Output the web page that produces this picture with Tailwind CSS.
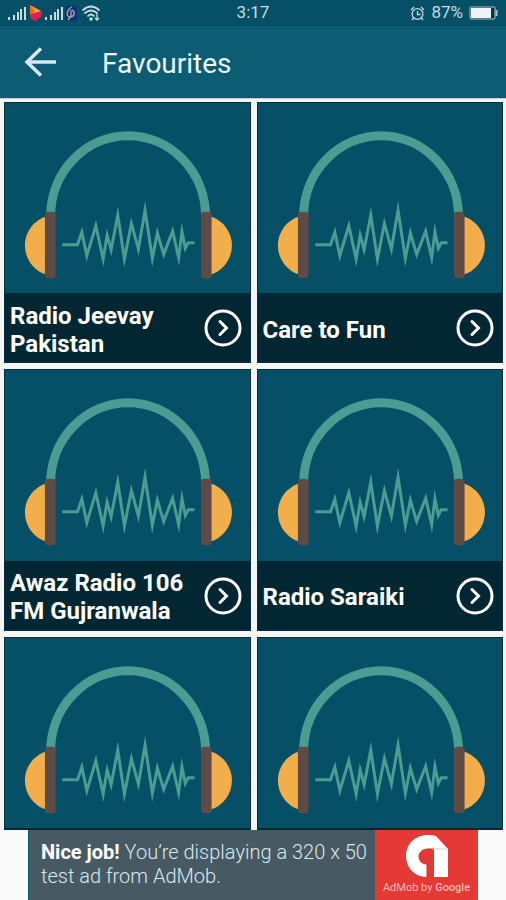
<!DOCTYPE html>
<html lang="en">
<head>
<meta charset="utf-8">
<meta name="viewport" content="width=device-width, initial-scale=1">
<title>Favourites</title>
<script src="https://cdn.jsdelivr.net/npm/@tailwindcss/browser@4"></script>
</head>
<body class="flex h-screen flex-col overflow-hidden bg-[#fafafa] font-['Roboto',sans-serif]">
<svg class="hidden" aria-hidden="true">
  <symbol id="headphones" viewBox="12 21 741 573">
    <path d="M152 364A233 243 0 0 1 618 364" fill="none" stroke="#4b9c93" stroke-width="27"/>
    <path d="M140 363A92 92 0 0 0 140 539ZM632 363A92 92 0 0 1 632 539Z" fill="#f2ae4b"/>
    <rect x="135" y="350" width="32" height="200" rx="10" fill="#5e4b45"/>
    <rect x="604" y="350" width="32" height="200" rx="10" fill="#5e4b45"/>
    <path d="M187 449H233L246 411L261 482L288 392L310 492L322 420L334 464L354 360L374 492L395 385L416 462L436 345L458 490L473 414L492 478L519 408L537 488L547 410L557 460L566 443H585" fill="none" stroke="#4b9c93" stroke-width="9" stroke-miterlimit="8"/>
  </symbol>
  <symbol id="go" viewBox="0 0 38 38">
    <circle cx="19" cy="19" r="17" fill="none" stroke="#fff" stroke-width="3"/>
    <path d="M16 12.500L22.500 19L16 25.500" fill="none" stroke="#fff" stroke-width="3" stroke-linecap="round"/>
  </symbol>
</svg>

<div class="grid h-[26px] shrink-0 grid-cols-3 items-center bg-[#055066] px-2 text-[#c9dbe1]">
  <svg class="h-5 w-24" viewBox="0 0 96 20" aria-hidden="true">
    <g fill="#c9dbe1">
      <path d="M0 14h2v3h-2zM5 12h2v5h-2zM9 9h2v8h-2zM12 6h2v11h-2zM16 4h2v13h-2zM37 14h2v3h-2zM42 12h2v5h-2zM46 9h2v8h-2zM49 6h2v11h-2zM53 4h2v13h-2z"/>
    </g>
    <path d="M22 2L33 8L32 11L24 12Z" fill="#f6a32b"/>
    <path d="M22 11L34 8L33 14L27 18L23 16Z" fill="#e0214f"/>
    <path d="M22 2L27 8L22 12Z" fill="#f0642d"/>
    <rect x="57" y="3" width="12" height="15" rx="2" fill="#12307f"/>
    <path d="M64 4C58 7 58 14 62 14S68 9 64 7M63 7v6L60 17" fill="none" stroke="#b8a99a" stroke-width="1.300"/>
    <g fill="none" stroke="#c9dbe1" stroke-width="1.700" stroke-linecap="round">
      <path d="M75 7Q83 0 91 7M77 10Q83 5 89 10M80 13Q83 10 86 13"/>
    </g>
    <circle cx="83" cy="16" r="1.800" fill="#c9dbe1"/>
    <path d="M89 11v6M87 15l2 2l2-2" fill="none" stroke="#c9dbe1" stroke-width="1.300"/>
  </svg>
  <span class="text-center text-[17px]">3:17</span>
  <div class="flex items-center justify-end gap-[6px]">
    <svg class="size-[15px]" viewBox="0 0 15 15" fill="none" stroke="#c9dbe1" stroke-width="1.300" aria-hidden="true">
      <circle cx="7.500" cy="8" r="5.400"/><path d="M7.500 5v3.500h3M1 4L4 1M14 4L11 1M3.500 12L2 14M11.500 12L13 14"/>
    </svg>
    <span class="text-[17px]">87%</span>
    <svg class="h-[14px] w-[29px]" viewBox="0 0 29 14" aria-hidden="true">
      <rect x="1" y="1" width="25" height="12" rx="1" fill="#073848" stroke="#a9c2ca"/><rect x="2" y="2" width="20" height="10" fill="#edf3f6"/><path d="M26.500 4h2v6h-2z" fill="#a9c2ca"/>
    </svg>
  </div>
</div>

<header class="flex h-[72px] shrink-0 items-center bg-[#0c5d74] px-6 pt-1">
  <button type="button" aria-label="Back" class="-mt-1">
    <svg class="h-[30px] w-8" viewBox="0 0 32 30" fill="none" stroke="#d5e9ef" stroke-width="3.500" aria-hidden="true"><path d="M32 15H3M17 1.500L3 15L17 28.500"/></svg>
  </button>
  <h1 class="ml-[46px] text-[28px] text-[#eef7fa]">Favourites</h1>
</header>

<main class="min-h-0 flex-1 overflow-hidden border-t border-[#c5ced2] bg-[#f5f5f5] pt-[3px] pr-[3px] pl-1">
  <div class="grid grid-cols-2 gap-[6px]">
    <a href="#" class="flex flex-col bg-[#055066] outline-1 -outline-offset-1 outline-[#062f42]">
      <svg class="aspect-[246/191] w-full" aria-hidden="true"><use href="#headphones"/></svg>
      <span class="flex h-[70px] items-center justify-between bg-[#022733] pr-[9px] pl-[6px]">
        <span class="pt-[3px] text-2xl leading-7 font-bold text-white">Radio Jeevay<br>Pakistan</span>
        <svg class="size-[38px] shrink-0" aria-hidden="true"><use href="#go"/></svg>
      </span>
    </a>
    <a href="#" class="flex flex-col bg-[#055066] outline-1 -outline-offset-1 outline-[#062f42]">
      <svg class="aspect-[246/191] w-full" aria-hidden="true"><use href="#headphones"/></svg>
      <span class="flex h-[70px] items-center justify-between bg-[#022733] pr-[9px] pl-[6px]">
        <span class="pt-[3px] text-2xl leading-7 font-bold text-white">Care to Fun</span>
        <svg class="size-[38px] shrink-0" aria-hidden="true"><use href="#go"/></svg>
      </span>
    </a>
    <a href="#" class="flex flex-col bg-[#055066] outline-1 -outline-offset-1 outline-[#062f42]">
      <svg class="aspect-[246/191] w-full" aria-hidden="true"><use href="#headphones"/></svg>
      <span class="flex h-[70px] items-center justify-between bg-[#022733] pr-[9px] pl-[6px]">
        <span class="pt-[3px] text-2xl leading-7 font-bold text-white">Awaz Radio 106<br>FM Gujranwala</span>
        <svg class="size-[38px] shrink-0" aria-hidden="true"><use href="#go"/></svg>
      </span>
    </a>
    <a href="#" class="flex flex-col bg-[#055066] outline-1 -outline-offset-1 outline-[#062f42]">
      <svg class="aspect-[246/191] w-full" aria-hidden="true"><use href="#headphones"/></svg>
      <span class="flex h-[70px] items-center justify-between bg-[#022733] pr-[9px] pl-[6px]">
        <span class="pt-[3px] text-2xl leading-7 font-bold text-white">Radio Saraiki</span>
        <svg class="size-[38px] shrink-0" aria-hidden="true"><use href="#go"/></svg>
      </span>
    </a>
    <a href="#" aria-label="Station 5" class="bg-[#055066] outline-1 -outline-offset-1 outline-[#062f42]">
      <svg class="aspect-[246/191] w-full" aria-hidden="true"><use href="#headphones"/></svg>
      <span class="block h-[70px] bg-[#022733]"></span>
    </a>
    <a href="#" aria-label="Station 6" class="bg-[#055066] outline-1 -outline-offset-1 outline-[#062f42]">
      <svg class="aspect-[246/191] w-full" aria-hidden="true"><use href="#headphones"/></svg>
      <span class="block h-[70px] bg-[#022733]"></span>
    </a>
  </div>
</main>

<aside class="flex h-[70px] shrink-0 justify-center">
  <a href="#" class="flex w-[450px] bg-[#475a64]">
    <p class="flex-1 border-l border-[#0c5d74] pt-[10px] pl-3 text-xl leading-6 font-light whitespace-nowrap text-[#dbe7ee]"><b class="font-bold text-white">Nice job!</b> You’re displaying a 320 x 50<br>test ad from AdMob.</p>
    <span class="flex w-[103px] flex-col items-center bg-[#e53935] pt-1">
      <svg class="h-[45px] w-[44px]" viewBox="0 0 44 45" aria-hidden="true">
        <path d="M23 1C10 1 1 10 1 22C1 34 10 43 22 43V30C17 30 14 27 14 22C14 18 18 15 23 15H29V43H43V15L31 2Q27 1 23 1Z" fill="#fff"/>
        <path d="M27 15H43" stroke="#dedede" stroke-width="1.500"/>
        <path d="M22 43V30C17 30 14 27 14 22C14 18 18 15 23 15H29" fill="none" stroke="#c9302c"/>
      </svg>
      <span class="pt-px text-[11px] leading-4 text-[#f8b9b6]">AdMob by <span class="font-medium">Google</span></span>
    </span>
  </a>
</aside>
</body>
</html>
